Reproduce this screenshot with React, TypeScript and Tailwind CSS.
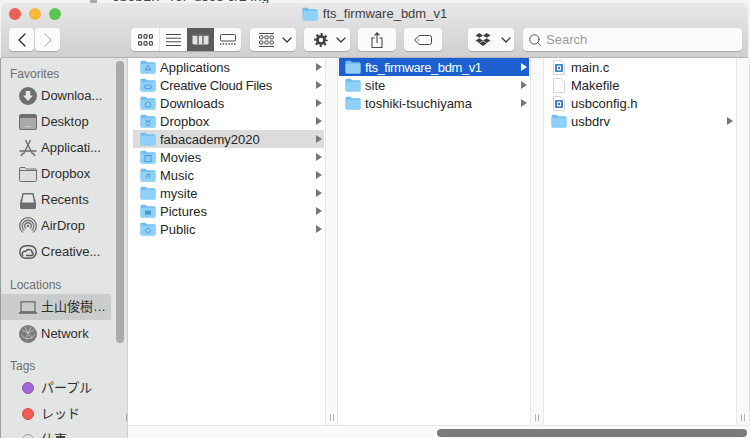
import React from "react";
import { ChevronLeft, ChevronRight, ChevronDown, Search } from "lucide-react";

const FONT = "font-['Liberation_Sans','Noto_Sans_CJK_JP',sans-serif]";

type Badge = "apps" | "cloud" | "down" | "drop" | "film" | "music" | "cam" | "pub" | null;

const Folder = ({ badge = null, className = "" }: { badge?: Badge; className?: string }) => (
  <svg width="16" height="14" viewBox="0 0 16 14" className={`shrink-0 ${className}`}>
    <path d="M0.5 2.2Q0.5 0.8 2 0.8H5.6L7 2.2H14Q15.5 2.2 15.5 3.6V12Q15.5 13.5 14 13.5H2Q0.5 13.5 0.5 12Z" fill="#6fbdf0" />
    <path d="M0.5 3.8H15.5V12Q15.5 13.5 14 13.5H2Q0.5 13.5 0.5 12Z" fill="#8fd0f8" />
    {badge === "apps" && <path d="M8 5L5 11M8 5L11 11M5 9.5H11" stroke="#4b9ad4" strokeWidth="0.9" fill="none" />}
    {badge === "cloud" && <ellipse cx="8" cy="8.8" rx="3.6" ry="2" stroke="#4b9ad4" strokeWidth="1" fill="none" />}
    {badge === "down" && <circle cx="8" cy="8.6" r="2.8" stroke="#4b9ad4" strokeWidth="1" fill="none" />}
    {badge === "drop" && <path d="M5.5 6L8 7.5L10.5 6M5.5 9L8 7.5L10.5 9M6 10.5L8 11.5L10 10.5" stroke="#4b9ad4" strokeWidth="1" fill="none" />}
    {badge === "film" && <rect x="5" y="5.6" width="6" height="6" stroke="#4b9ad4" strokeWidth="1" fill="none" />}
    {badge === "music" && <path d="M7 10.5V6.5L9.6 6V9.8" stroke="#4b9ad4" strokeWidth="1" fill="none" />}
    {badge === "cam" && <rect x="5" y="6.6" width="6" height="4.2" rx="0.6" fill="#4b9ad4" />}
    {badge === "pub" && <path d="M8 5.8L10.8 8.6L8 11.4L5.2 8.6Z" stroke="#4b9ad4" strokeWidth="1" fill="none" />}
  </svg>
);

const CFile = () => (
  <svg width="12" height="15" viewBox="0 0 12 15" className="shrink-0">
    <path d="M0.5 0.5H8L11.5 4V14.5H0.5Z" fill="#fff" stroke="#d5d5d5" />
    <rect x="2" y="4" width="8" height="8" rx="1" fill="#3a7fc4" />
    <rect x="4" y="5.6" width="4" height="4.8" rx="1" fill="#fff" />
    <rect x="5.2" y="6.8" width="1.6" height="2.4" fill="#3a4a5a" />
  </svg>
);

const PlainFile = () => (
  <svg width="12" height="15" viewBox="0 0 12 15" className="shrink-0">
    <path d="M0.5 0.5H8L11.5 4V14.5H0.5Z" fill="#fff" stroke="#d5d5d5" />
  </svg>
);

const Arrow = ({ white = false }: { white?: boolean }) => (
  <svg width="6" height="8" viewBox="0 0 6 8" className="shrink-0">
    <path d="M0 0L6 4L0 8Z" fill={white ? "#ffffff" : "#777777"} />
  </svg>
);

const DropboxMark = () => (
  <svg width="16" height="13" viewBox="0 0 16 14" className="shrink-0">
    <path d="M4 0L8 2.6L4 5.2L0 2.6ZM12 0L16 2.6L12 5.2L8 2.6ZM4 5.6L8 8.2L4 10.8L0 8.2ZM12 5.6L16 8.2L12 10.8L8 8.2ZM4 11.4L8 8.8L12 11.4L8 14Z" fill="#3f3f3f" />
  </svg>
);

const Gear = () => (
  <svg width="14" height="14" viewBox="0 0 14 14" className="shrink-0" fill="none" stroke="#3f3f3f">
    <circle cx="7" cy="7" r="3.6" strokeWidth="2.8" />
    <circle cx="7" cy="7" r="5.8" strokeWidth="2.2" strokeDasharray="2.2 2.35" strokeDashoffset="1.1" />
  </svg>
);

const Btn = ({ className = "", children }: { className?: string; children?: React.ReactNode }) => (
  <div className={`h-[23px] bg-[#fbfbfb] rounded-[4px] shadow-[0_1px_1px_rgba(0,0,0,0.2)] flex items-center ${className}`}>
    {children}
  </div>
);

const SideIcon = ({ name }: { name: string }) => {
  const c = "#6e6e6e";
  switch (name) {
    case "down":
      return (
        <svg width="18" height="18" viewBox="0 0 18 18"><circle cx="9" cy="9" r="9" fill={c} /><path d="M6.8 4H11.2V8.5H14L9 14L4 8.5H6.8Z" fill="#e6e6e6" /></svg>
      );
    case "desk":
      return (
        <svg width="18" height="16" viewBox="0 0 18 16"><rect x="0.5" y="0.5" width="17" height="15" rx="1.5" fill="#a9a9a9" stroke={c} /><rect x="1" y="1" width="16" height="3" fill={c} /><path d="M6.5 12.5H11.5" stroke="#eee" strokeDasharray="1 1" /></svg>
      );
    case "apps":
      return (
        <svg width="18" height="18" viewBox="0 0 18 18" fill="none" stroke={c} strokeWidth="1.5"><path d="M6.5 1L13.5 15M11.5 1L4.5 15M0.5 12H17.5M2 17L4 14M16 17L14 14" /></svg>
      );
    case "folder":
      return (
        <svg width="18" height="15" viewBox="0 0 18 15" fill="#dedede" stroke={c}><path d="M0.5 1.5Q0.5 0.5 1.5 0.5H6L7.5 2H16.5Q17.5 2 17.5 3V13.5Q17.5 14.5 16.5 14.5H1.5Q0.5 14.5 0.5 13.5Z" /><path d="M0.5 3.5H17.5" fill="none" /></svg>
      );
    case "recent":
      return (
        <svg width="16" height="17" viewBox="0 0 16 17"><path d="M2.5 1H13.5L16 11V15.5Q16 17 14.5 17H1.5Q0 17 0 15.5V11Z" fill={c} /><path d="M3.6 2.4H12.4L14 10.5H2Z" fill="#e6e6e6" /></svg>
      );
    case "air":
      return (
        <svg width="18" height="18" viewBox="0 0 18 18" fill="none" stroke={c} strokeWidth="1.3"><path d="M4 15.6A8.3 8.3 0 1 1 14 15.6" /><path d="M5.4 13.6A5.8 5.8 0 1 1 12.6 13.6" /><path d="M6.9 11.6A3.3 3.3 0 1 1 11.1 11.6" /><circle cx="9" cy="9" r="1.2" fill={c} stroke="none" /></svg>
      );
    case "cc":
      return (
        <svg width="18" height="14" viewBox="0 0 18 14" fill="none" stroke="#555" strokeWidth="1.4"><rect x="0.8" y="0.8" width="16.4" height="12.4" rx="6.2" /><path d="M4.5 10.5C2 9 3.8 5.5 6.5 6.5C8.5 3 13.5 4.5 13 7.5C15 8 14.5 10.5 12.5 10.5H7" /></svg>
      );
    case "laptop":
      return (
        <svg width="18" height="13" viewBox="0 0 18 13" fill="none" stroke="#666" strokeWidth="1.2"><rect x="2" y="0.8" width="14" height="10" /><path d="M0 12H18" strokeWidth="1.6" /></svg>
      );
    default:
      return (
        <svg width="18" height="18" viewBox="0 0 18 18"><circle cx="9" cy="9" r="9" fill="#7b7b7b" /><path d="M3 5L9 8L15 5M9 8L7 14M9 8L13 13M2 10L7 14L13 13L16 9M6 2L9 8L12 2" stroke="#c9c9c9" strokeWidth="0.8" fill="none" /></svg>
      );
  }
};

const SideRow = ({ icon, label, active = false, className = "" }: { icon: string; label: string; active?: boolean; className?: string }) => (
  <div className={`h-[26px] flex items-center pl-[18px] shrink-0 ${active ? "bg-[#cbcdcd]" : ""} ${className}`}>
    <div className="w-[18px] flex justify-center shrink-0">
      <SideIcon name={icon} />
    </div>
    <span className="ml-[4px] text-[13px] text-[#2e2e2e] whitespace-nowrap">{label}</span>
  </div>
);

const TagRow = ({ color, border, label }: { color: string; border: string; label: string }) => (
  <div className="h-[26px] flex items-center pl-[21px] shrink-0">
    <span className="w-[12px] h-[12px] rounded-full border shrink-0" style={{ backgroundColor: color, borderColor: border }} />
    <span className="ml-[7px] text-[13px] text-[#2e2e2e] whitespace-nowrap">{label}</span>
  </div>
);

const SectionLabel = ({ children, className = "" }: { children: React.ReactNode; className?: string }) => (
  <div className={`h-[14px] mb-[2px] pl-[9px] text-[12px] leading-[14px] text-[#6f6f6f] shrink-0 ${className}`}>{children}</div>
);

const Row = ({
  icon,
  label,
  arrow = true,
  state = "",
  className = "pl-[7px]",
  labelClass = "",
}: {
  icon: React.ReactNode;
  label: string;
  arrow?: boolean;
  state?: "" | "blue" | "gray";
  className?: string;
  labelClass?: string;
}) => (
  <div
    className={`h-[18px] flex items-center pr-[2px] ${className} ${
      state === "blue" ? "bg-[#1c5fd0] text-white" : state === "gray" ? "bg-[#dcdcdc] text-[#262626]" : "text-[#262626]"
    }`}
  >
    <div className="w-[16px] flex justify-center shrink-0">{icon}</div>
    <span className={`ml-[4px] flex-1 text-[13px] whitespace-nowrap leading-none ${labelClass}`}>{label}</span>
    {arrow && <Arrow white={state === "blue"} />}
  </div>
);

const ColDivider = ({ className = "" }: { className?: string }) => (
  <div className={`bg-[#f9f9f9] border-x border-[#e6e6e6] flex items-end justify-center gap-[2px] pb-[4px] shrink-0 ${className}`}>
    <span className="w-px h-[7px] bg-[#b5b5b5]" />
    <span className="w-px h-[7px] bg-[#b5b5b5]" />
  </div>
);

const col1: { label: string; badge: Badge; state?: "gray"; tight?: boolean }[] = [
  { label: "Applications", badge: "apps" },
  { label: "Creative Cloud Files", badge: "cloud", tight: true },
  { label: "Downloads", badge: "down" },
  { label: "Dropbox", badge: "drop" },
  { label: "fabacademy2020", badge: null, state: "gray" },
  { label: "Movies", badge: "film" },
  { label: "Music", badge: "music" },
  { label: "mysite", badge: null },
  { label: "Pictures", badge: "cam" },
  { label: "Public", badge: "pub" },
];

export default function App() {
  return (
    <div className={`w-[750px] h-[438px] overflow-hidden bg-[#f4f4f4] flex flex-col ${FONT}`}>
      {/* sliver of the window behind */}
      <div className="h-[3px] shrink-0 overflow-hidden flex bg-[#f4f4f4]">
        <span className="w-[7px] h-[3px] ml-[90px] bg-[#a8a8a8] shrink-0" />
        <span className="ml-[15px] -mt-[11px] text-[14px] leading-[14px] text-[#444] whitespace-nowrap">0b0b1.7_rel_uses 0/2 ing</span>
      </div>

      {/* Toolbar */}
      <div className="h-[55px] shrink-0 ml-px mr-[2px] rounded-t-[6px] border-b border-[#b4b4b4] bg-gradient-to-b from-[#e8e8e8] to-[#d0d0d0] flex flex-col">
        <div className="h-[22px] flex items-center">
          <div className="flex gap-[8px] pl-[8px] w-[61px] shrink-0">
            <span className="w-[12px] h-[12px] rounded-full bg-[#ec5f57]" />
            <span className="w-[12px] h-[12px] rounded-full bg-[#f4b83f]" />
            <span className="w-[12px] h-[12px] rounded-full bg-[#5fc454]" />
          </div>
          <div className="flex-1 flex justify-center items-center gap-[5px] pr-[61px]">
            <Folder />
            <span className="text-[13px] text-[#3f3f3f]">fts_firmware_bdm_v1</span>
          </div>
        </div>
        <div className="flex items-center pt-[3px] pl-[8px]">
          <div className="flex gap-px">
            <Btn className="w-[25px] justify-center"><ChevronLeft size={24} strokeWidth={1.2} className="text-[#222]" /></Btn>
            <Btn className="w-[25px] justify-center"><ChevronRight size={24} strokeWidth={1} className="text-[#aaa]" /></Btn>
          </div>
          <div className="ml-[71px] flex bg-[#fbfbfb] rounded-[4px] h-[23px] shadow-[0_1px_1px_rgba(0,0,0,0.2)]">
            <div className="w-[29px] flex items-center justify-center border-r border-[#e2e2e2]">
              <svg width="15" height="12" viewBox="0 0 15 12" fill="none" stroke="#4b4b4b" strokeWidth="1.2">
                {[0.6, 6, 11.4].map((x) =>
                  [0.6, 7.6].map((y) => <rect key={`${x}-${y}`} x={x} y={y} width="3" height="3.6" rx="0.9" />)
                )}
              </svg>
            </div>
            <div className="w-[27px] flex items-center justify-center">
              <svg width="15" height="12" viewBox="0 0 15 12" stroke="#4b4b4b"><path d="M0 0.5H15M0 4.2H15M0 7.8H15M0 11.5H15" /></svg>
            </div>
            <div className="w-[27px] flex items-center justify-center bg-[#5b5b5b]">
              <svg width="17" height="11" viewBox="0 0 17 11"><rect x="0.5" y="0.5" width="16" height="10" rx="1.5" fill="#e4e4e4" /><path d="M6 1V10M11 1V10M1 1H16" stroke="#5b5b5b" strokeWidth="1.3" /></svg>
            </div>
            <div className="w-[27px] flex items-center justify-center">
              <svg width="16" height="11" viewBox="0 0 16 11" fill="none" stroke="#4b4b4b"><rect x="0.5" y="0.5" width="15" height="6.5" rx="1" /><path d="M0 10H16" strokeDasharray="1.4 1.4" strokeWidth="1.3" /></svg>
            </div>
          </div>
          <Btn className="ml-[9px] w-[46px] gap-[5px] pl-[9px]">
            <svg width="15" height="14" viewBox="0 0 15 14" fill="none" stroke="#4b4b4b" className="shrink-0"><path d="M0 0.5H15M0 13.5H15" /><rect x="0.5" y="2.8" width="3.4" height="3" rx="0.8" /><rect x="5.8" y="2.8" width="3.4" height="3" rx="0.8" /><rect x="11" y="2.8" width="3.4" height="3" rx="0.8" /><rect x="0.5" y="8" width="3.4" height="3" rx="0.8" /><rect x="5.8" y="8" width="3.4" height="3" rx="0.8" /><rect x="11" y="8" width="3.4" height="3" rx="0.8" /></svg>
            <ChevronDown size={16} strokeWidth={1.8} className="text-[#333] shrink-0" />
          </Btn>
          <Btn className="ml-[8px] w-[46px] gap-[5px] pl-[10px]">
            <Gear />
            <ChevronDown size={16} strokeWidth={1.8} className="text-[#333] shrink-0" />
          </Btn>
          <Btn className="ml-[8px] w-[38px] justify-center">
            <svg width="12" height="16" viewBox="0 0 12 16" fill="none" stroke="#4b4b4b" strokeWidth="1.1"><path d="M3.5 6H1V15.5H11V6H8.5M6 11V1M3.5 3.3L6 0.8L8.5 3.3" /></svg>
          </Btn>
          <Btn className="ml-[8px] w-[38px] justify-center">
            <svg width="18" height="10" viewBox="0 0 18 10" fill="none" stroke="#4b4b4b"><path d="M5 0.5H15.5Q17.5 0.5 17.5 2.5V7.5Q17.5 9.5 15.5 9.5H5L0.6 5Z" /><circle cx="4.2" cy="5" r="0.7" fill="#4b4b4b" stroke="none" /></svg>
          </Btn>
          <Btn className="ml-[26px] w-[46px] gap-[7px] pl-[7px]">
            <DropboxMark />
            <ChevronDown size={16} strokeWidth={1.8} className="text-[#333] shrink-0" />
          </Btn>
          <Btn className="ml-[9px] w-[219px] pl-[5px] gap-[4px]">
            <Search size={14} strokeWidth={1.5} className="text-[#444]" />
            <span className="text-[13px] text-[#9c9c9c]">Search</span>
          </Btn>
        </div>
      </div>

      <div className="flex-1 flex min-h-0">
        {/* Sidebar */}
        <div className="w-[128px] shrink-0 bg-[#e3e4e4] border-l border-l-[#9c9c9c] border-r border-r-[#cfcfcf] relative overflow-hidden flex flex-col pt-[9px]">
          <SectionLabel>Favorites</SectionLabel>
          <div className="w-[110px]">
            <SideRow icon="down" label="Downloa..." />
            <SideRow icon="desk" label="Desktop" />
            <SideRow icon="apps" label="Applicati..." />
            <SideRow icon="folder" label="Dropbox" />
            <SideRow icon="recent" label="Recents" />
            <SideRow icon="air" label="AirDrop" />
            <SideRow icon="cc" label="Creative..." />
          </div>
          <SectionLabel className="mt-[13px]">Locations</SectionLabel>
          <div className="w-[110px]">
            <SideRow icon="laptop" label="土山俊樹…" active />
            <SideRow icon="net" label="Network" className="mt-px" />
          </div>
          <SectionLabel className="mt-[12px]">Tags</SectionLabel>
          <TagRow color="#a566d6" border="#8f55bd" label="パープル" />
          <TagRow color="#ec5f52" border="#d04b40" label="レッド" />
          <TagRow color="#e3e4e4" border="#9a9a9a" label="仕事" />
          <div className="absolute left-[115px] top-[3px] w-[8px] h-[282px] rounded-full bg-[#a9abab]" />
          <div className="absolute right-0 bottom-[17px] w-px h-[7px] bg-[#a5a5a5]" />
        </div>

        {/* Columns */}
        <div className="flex-1 flex flex-col min-w-0 bg-white">
          <div className="flex-1 flex min-h-0">
            <div className="w-[197px] shrink-0 pl-[5px] pr-px">
              {col1.map((r) => (
                <Row
                  key={r.label}
                  label={r.label}
                  state={r.state}
                  icon={<Folder badge={r.badge} />}
                  labelClass={r.tight ? "-ml-px tracking-[-0.25px]" : "-ml-px"}
                />
              ))}
            </div>
            <ColDivider className="w-[13px]" />
            <div className="w-[192px] shrink-0 px-px">
              <Row label="fts_firmware_bdm_v1" state="blue" icon={<Folder />} className="pl-[6px]" labelClass="tracking-[-0.4px]" />
              <Row label="site" icon={<Folder />} className="pl-[6px]" />
              <Row label="toshiki-tsuchiyama" icon={<Folder />} className="pl-[6px]" />
            </div>
            <ColDivider className="w-[14px]" />
            <div className="w-[192px] shrink-0 pr-px">
              <Row label="main.c" arrow={false} icon={<CFile />} />
              <Row label="Makefile" arrow={false} icon={<PlainFile />} />
              <Row label="usbconfig.h" arrow={false} icon={<CFile />} />
              <Row label="usbdrv" icon={<Folder />} />
            </div>
            <ColDivider className="flex-1" />
          </div>
          <div className="h-[13px] shrink-0 bg-[#fafafa] border-t border-[#e6e6e6] flex items-center justify-end pr-[3px] pt-px">
            <div className="w-[310px] h-[8px] rounded-full bg-[#7b7b7b]" />
          </div>
        </div>
      </div>
    </div>
  );
}
